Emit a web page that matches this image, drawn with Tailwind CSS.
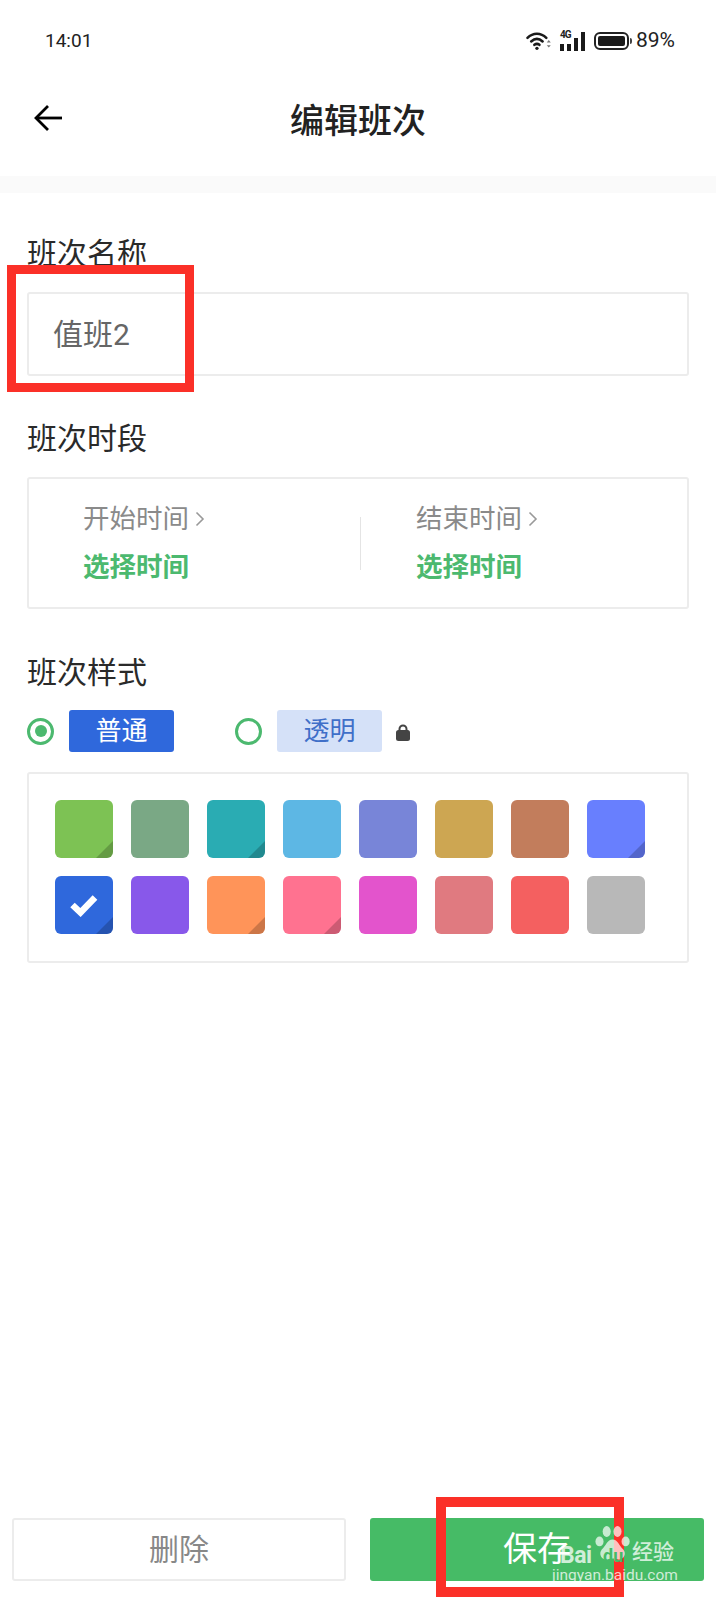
<!DOCTYPE html>
<html lang="zh">
<head>
    <meta charset="UTF-8">
    <meta name="viewport" content="width=device-width, initial-scale=1.0">
    <title>编辑班次</title>
    <script src="https://cdn.jsdelivr.net/npm/@tailwindcss/browser@4"></script>
</head>
<body class="bg-white font-['Roboto','Noto_Sans_CJK_SC',sans-serif]">
<div class="relative w-[716px] h-[1600px] overflow-hidden flex flex-col bg-white">

    <!-- status bar -->
    <div class="h-[82px] flex items-center justify-between pl-[45px] pr-[41px] text-[#222]">
        <span class="text-[19px]">14:01</span>
        <div class="flex items-center">
            <svg width="25" height="22" viewBox="0 0 27 24" fill="none" stroke="#1a1a1a" stroke-width="2.8" stroke-linecap="round">
                <path d="M1.5 8.5C7.5 2.5 16 2.5 22 8.5"/>
                <path d="M5.5 12.5C9.5 8.8 14 8.8 18 12.5"/>
                <path d="M9 16.2C10.8 14.8 12.8 14.8 14.5 16.2"/>
                <circle cx="11.8" cy="20" r="1.8" fill="#1a1a1a" stroke="none"/>
                <path d="M22.5 13.5l2.2-2.600 2.2 2.600zM22.5 16.5l2.2 2.600 2.2-2.600z" fill="#777" stroke="none"/>
            </svg>
            <div class="relative w-[26px] h-[20px] ml-[9px]">
                <span class="absolute left-0 top-[-2px] text-[10px] leading-[11px] font-bold tracking-[-1px]">4G</span>
                <div class="absolute inset-0 flex items-end justify-between pr-[1px]">
                    <div class="w-[4px] h-[7px] bg-[#1a1a1a]"></div>
                    <div class="w-[4px] h-[7px] bg-[#1a1a1a]"></div>
                    <div class="w-[4px] h-[13px] bg-[#1a1a1a]"></div>
                    <div class="w-[4px] h-[19px] bg-[#1a1a1a]"></div>
                </div>
            </div>
            <div class="flex items-center ml-[8px]">
                <div class="w-[35px] h-[18px] rounded-[6px] border-2 border-[#222] p-[2px]">
                    <div class="w-[27px] h-full rounded-[2px] bg-[#1a1a1a]"></div>
                </div>
                <div class="w-[2px] h-[6px] bg-[#444] ml-[1px] rounded-r"></div>
            </div>
            <span class="text-[21px] ml-[4px]">89%</span>
        </div>
    </div>

    <!-- title bar -->
    <div class="relative h-[94px] flex items-center justify-center">
        <svg class="absolute left-[33px] top-[21px]" width="30" height="30" viewBox="0 0 30 30" fill="none" stroke="#000" stroke-width="2.8">
            <path d="M29 15H3"/>
            <path d="M15 3L3 15l12 12"/>
        </svg>
        <h1 class="text-[34px] leading-[44px] text-[#222] font-medium mt-[-16px]">编辑班次</h1>
    </div>
    <div class="h-[17px] bg-[#fafafa]"></div>

    <!-- form -->
    <div class="px-[27px]">
        <div class="mt-[41px] text-[30px] leading-[40px] text-[#2a2a2a]">班次名称</div>
        <div class="mt-[18px] h-[84px] border-2 border-[#ececec] rounded-[3px] flex items-center pl-[24px] text-[30px] text-[#666]">值班2</div>

        <div class="mt-[43px] text-[30px] leading-[40px] text-[#2a2a2a]">班次时段</div>
        <div class="mt-[18px] h-[132px] border-2 border-[#ececec] rounded-[3px] flex items-center">
            <div class="w-[331px] pl-[54px]">
                <div class="flex items-center text-[26.500px] leading-[36px] text-[#8a8a8a]">开始时间
                    <svg class="ml-[6px]" width="10" height="16" viewBox="0 0 10 16" fill="none" stroke="#999" stroke-width="1.6"><path d="M1.5 1.5L8 8l-6.500 6.500"/></svg>
                </div>
                <div class="mt-[12px] text-[26.500px] leading-[36px] font-bold text-[#4cb96f]">选择时间</div>
            </div>
            <div class="w-px h-[53px] bg-[#e4e4e4]"></div>
            <div class="pl-[55px]">
                <div class="flex items-center text-[26.500px] leading-[36px] text-[#8a8a8a]">结束时间
                    <svg class="ml-[6px]" width="10" height="16" viewBox="0 0 10 16" fill="none" stroke="#999" stroke-width="1.6"><path d="M1.5 1.5L8 8l-6.500 6.500"/></svg>
                </div>
                <div class="mt-[12px] text-[26.500px] leading-[36px] font-bold text-[#4cb96f]">选择时间</div>
            </div>
        </div>

        <div class="mt-[44px] text-[30px] leading-[40px] text-[#2a2a2a]">班次样式</div>
        <div class="mt-[17px] h-[42px] flex items-center">
            <div class="w-[27px] h-[27px] rounded-full border-[3px] border-[#4cb96f] flex items-center justify-center">
                <div class="w-[12px] h-[12px] rounded-full bg-[#4cb96f]"></div>
            </div>
            <div class="ml-[15px] w-[105px] h-[42px] rounded-[3px] bg-[#2f68dc] text-white text-[26px] flex items-center justify-center">普通</div>
            <div class="ml-[61px] w-[27px] h-[27px] rounded-full border-[3px] border-[#4cb96f]"></div>
            <div class="ml-[15px] w-[105px] h-[42px] rounded-[3px] bg-[#d5e1f8] text-[#3f6fc8] text-[26px] flex items-center justify-center">透明</div>
            <svg class="ml-[13px] mt-[2px]" width="16" height="18" viewBox="0 0 16 18">
                <path d="M4.500 8V6a3.500 3.500 0 0 1 7 0v2" fill="none" stroke="#444" stroke-width="2"/>
                <rect x="1" y="7" width="14" height="11" rx="2.500" fill="#444"/>
            </svg>
        </div>

        <div class="mt-[20px] h-[191px] border-2 border-[#ececec] rounded-[3px] pl-[26px] pt-[26px]">
            <div class="grid grid-cols-[repeat(8,58px)] gap-[18px]">
                <div class="relative w-[58px] h-[58px] rounded-[6px] overflow-hidden bg-[#7dc254]">
                    <svg class="absolute right-0 bottom-0" width="17" height="17" viewBox="0 0 17 17"><path d="M17 0V17H0z" fill="#000" fill-opacity=".2"/></svg>
                </div>
                <div class="w-[58px] h-[58px] rounded-[6px] bg-[#7aa885]"></div>
                <div class="relative w-[58px] h-[58px] rounded-[6px] overflow-hidden bg-[#2aacb3]">
                    <svg class="absolute right-0 bottom-0" width="17" height="17" viewBox="0 0 17 17"><path d="M17 0V17H0z" fill="#000" fill-opacity=".2"/></svg>
                </div>
                <div class="w-[58px] h-[58px] rounded-[6px] bg-[#5db7e4]"></div>
                <div class="w-[58px] h-[58px] rounded-[6px] bg-[#7885d8]"></div>
                <div class="w-[58px] h-[58px] rounded-[6px] bg-[#cda652]"></div>
                <div class="w-[58px] h-[58px] rounded-[6px] bg-[#c27d5c]"></div>
                <div class="relative w-[58px] h-[58px] rounded-[6px] overflow-hidden bg-[#687ffe]">
                    <svg class="absolute right-0 bottom-0" width="17" height="17" viewBox="0 0 17 17"><path d="M17 0V17H0z" fill="#000" fill-opacity=".2"/></svg>
                </div>
                <div class="relative w-[58px] h-[58px] rounded-[6px] overflow-hidden bg-[#2f68dc] flex items-center justify-center">
                    <svg width="28" height="24" viewBox="0 0 28 24" fill="none" stroke="#fff" stroke-width="6.500"><path d="M2.500 12l8 7.500L25 4.500"/></svg>
                    <svg class="absolute right-0 bottom-0" width="17" height="17" viewBox="0 0 17 17"><path d="M17 0V17H0z" fill="#000" fill-opacity=".2"/></svg>
                </div>
                <div class="w-[58px] h-[58px] rounded-[6px] bg-[#8858ea]"></div>
                <div class="relative w-[58px] h-[58px] rounded-[6px] overflow-hidden bg-[#ff9459]">
                    <svg class="absolute right-0 bottom-0" width="17" height="17" viewBox="0 0 17 17"><path d="M17 0V17H0z" fill="#000" fill-opacity=".2"/></svg>
                </div>
                <div class="relative w-[58px] h-[58px] rounded-[6px] overflow-hidden bg-[#ff7290]">
                    <svg class="absolute right-0 bottom-0" width="17" height="17" viewBox="0 0 17 17"><path d="M17 0V17H0z" fill="#000" fill-opacity=".2"/></svg>
                </div>
                <div class="w-[58px] h-[58px] rounded-[6px] bg-[#e354cc]"></div>
                <div class="w-[58px] h-[58px] rounded-[6px] bg-[#e07a80]"></div>
                <div class="w-[58px] h-[58px] rounded-[6px] bg-[#f46060]"></div>
                <div class="w-[58px] h-[58px] rounded-[6px] bg-[#b8b8b8]"></div>
            </div>
        </div>
    </div>

    <!-- bottom buttons -->
    <div class="mt-auto mb-[19px] px-[12px] flex gap-[24px]">
        <div class="w-[334px] h-[63px] border-2 border-[#ececec] rounded-[3px] flex items-center justify-center text-[30px] text-[#888]">删除</div>
        <div class="w-[334px] h-[63px] rounded-[3px] bg-[#46bb66] flex items-center justify-center text-[34px] text-white">保存</div>
    </div>

    <!-- red annotation boxes -->
    <div class="absolute left-[7px] top-[265px] w-[187px] h-[127px] border-[9px] border-[#fb3028]"></div>
    <div class="absolute left-[436px] top-[1497px] w-[188px] h-[100px] border-[10px] border-[#fb3028]"></div>

    <!-- watermark -->
    <div class="absolute left-[552px] top-[1528px] w-[130px] h-[58px] text-white/75">
        <span class="absolute left-[8px] top-[14px] text-[23px] leading-[28px] font-bold tracking-[-0.5px]">Bai</span>
        <svg class="absolute left-[43px] top-[-3px]" width="36" height="40" viewBox="0 0 40 42" fill="#fff" fill-opacity=".7">
            <ellipse cx="13" cy="6" rx="4.500" ry="6"/>
            <ellipse cx="25" cy="6" rx="4.500" ry="6"/>
            <ellipse cx="5" cy="17" rx="4.500" ry="5.500"/>
            <ellipse cx="34" cy="17" rx="4.500" ry="5.500"/>
            <path d="M19.500 15c6 0 7 7 12 11 4 5 0 12-6 11-3-.5-4-1-6-1s-3 .5-6 1c-6 1-10-6-6-11 5-4 6-11 12-11z"/>
        </svg>
        <span class="absolute left-[51px] top-[18px] text-[18px] leading-[20px] font-bold text-[#46bb66]">du</span>
        <span class="absolute left-[80px] top-[12px] text-[21px] leading-[24px] font-medium">经验</span>
        <span class="absolute left-0 top-[38px] text-[15.500px] leading-[18px] whitespace-nowrap">jingyan.baidu.com</span>
    </div>
</div>
</body>
</html>
